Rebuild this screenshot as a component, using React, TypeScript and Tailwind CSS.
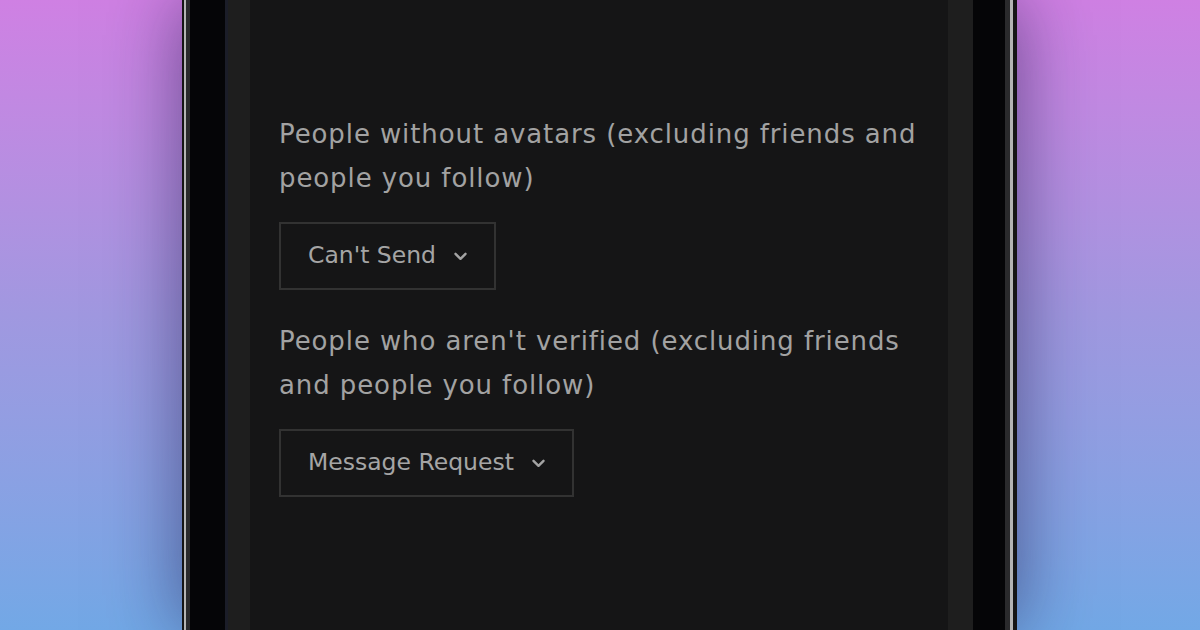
import React from "react";

function Chevron() {
  return (
    <svg width="13" height="9" viewBox="0 0 13 9" fill="none" className="shrink-0">
      <path d="M1.5 1.8l5 5 5-5" stroke="#a3a3a3" strokeWidth="2.4" strokeLinecap="round" strokeLinejoin="round" />
    </svg>
  );
}

function Select({ label }: { label: string }) {
  return (
    <div className="mt-[22px] inline-flex h-[68px] items-center gap-[18px] border-2 border-[#323232] pl-[27px] pr-[27px] text-[23.5px] text-[#a5a5a5]">
      <span>{label}</span>
      <Chevron />
    </div>
  );
}

export default function App() {
  return (
    <div
      className="flex h-[630px] w-[1200px] overflow-hidden bg-gradient-to-b from-[#cf80e3] via-[#a098e0] to-[#72a8e6] pl-[182px]"
      style={{ fontFamily: '"DejaVu Sans", "Noto Sans", sans-serif' }}
    >
      <div className="flex h-full w-[835px] border-l-2 border-r-4 border-[#151515] shadow-[0_0_70px_rgba(30,20,70,0.55)]">
        <div className="flex flex-1 border-l-2 border-r-[3px] border-[#b4b4b4]">
          <div className="flex flex-1 border-l-4 border-r-[5px] border-[#2a2a2c]">
            <div className="flex flex-1 border-l-[35px] border-r-[32px] border-[#050507]">
              <div className="flex flex-1 border-l-[3px] border-[#1b1d28]">
                <div className="flex flex-1 border-l-[22px] border-r-[25px] border-[#1e1e1e]">
                  <div className="flex-1 bg-[#151516] px-[29px] pt-[112px]">
                    <p className="text-[26px] leading-[44px] tracking-[0.9px] text-[#a2a2a2]">
                      People without avatars (excluding friends and people you follow)
                    </p>
                    <Select label="Can't Send" />
                    <p className="mt-[29px] text-[26px] leading-[44px] tracking-[0.9px] text-[#a2a2a2]">
                      People who aren't verified (excluding friends and people you follow)
                    </p>
                    <Select label="Message Request" />
                  </div>
                </div>
              </div>
            </div>
          </div>
        </div>
      </div>
    </div>
  );
}
